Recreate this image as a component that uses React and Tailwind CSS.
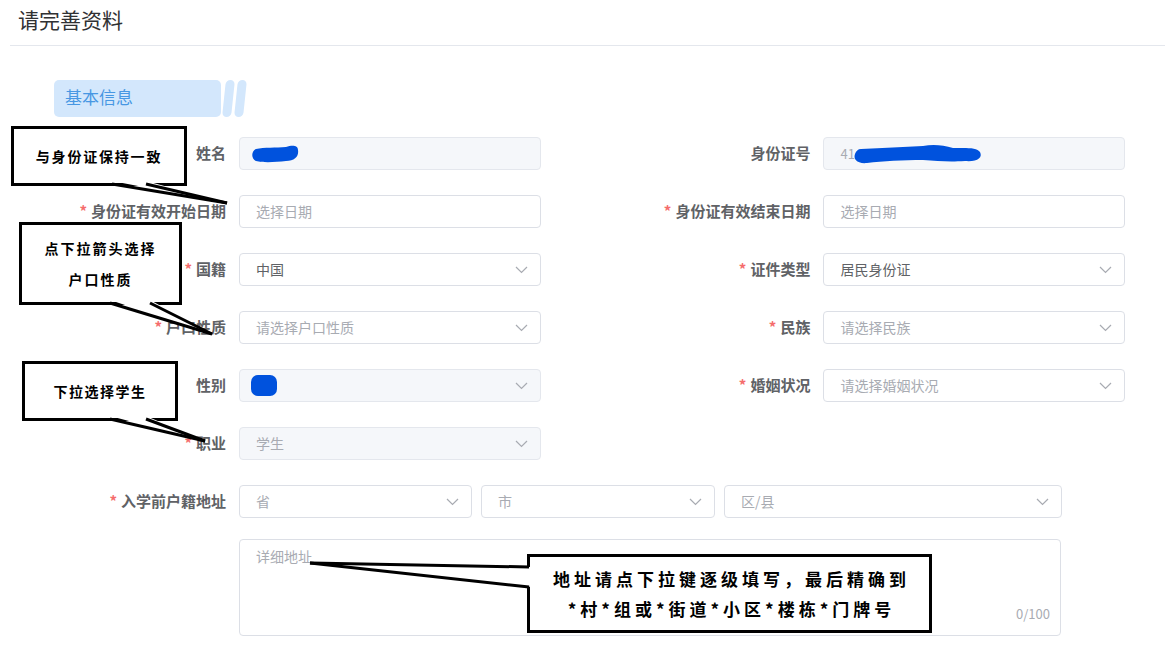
import React from 'react';

const FONT = { fontFamily: '"Noto Sans CJK SC", "Noto Sans", sans-serif' };

function Chevron() {
  return (
    <svg width="13" height="8" viewBox="0 0 13 8" className="shrink-0">
      <polyline points="1,1 6.5,6.5 12,1" fill="none" stroke="#a8abb2" strokeWidth="1.2" />
    </svg>
  );
}

function Field({ width, disabled, value, placeholder, select, children }) {
  return (
    <div
      className={`h-[33px] rounded-[4px] border flex items-center pl-[16px] pr-[12px] text-[14px] ${
        disabled ? 'bg-[#f5f7fa] border-[#e4e7ed]' : 'bg-white border-[#dcdfe6]'
      }`}
      style={{ width }}
    >
      <div className="flex-1 flex items-center min-w-0">
        {children}
        {value ? (
          <span className={disabled ? 'text-[#a8abb2]' : 'text-[#606266]'}>{value}</span>
        ) : (
          placeholder && <span className="text-[#a8abb2]">{placeholder}</span>
        )}
      </div>
      {select && <Chevron />}
    </div>
  );
}

function Label({ required, children }) {
  return (
    <div className="w-[239px] pr-[13px] text-right text-[15px] font-bold text-[#606266] shrink-0">
      {required && <span className="text-[#f56c6c] mr-[4px]">*</span>}
      {children}
    </div>
  );
}

function Item({ label, required, ...field }) {
  return (
    <div className="w-[586px] flex items-center">
      <Label required={required}>{label}</Label>
      <Field width="302px" {...field} />
    </div>
  );
}

function Callout({ className, textClass, lines }) {
  return (
    <div
      className={`absolute border-[3px] border-black bg-white flex flex-col items-center justify-center font-bold text-black ${className}`}
    >
      {lines.map((l) => (
        <div key={l} className={textClass}>
          {l}
        </div>
      ))}
    </div>
  );
}

// speech tails: two base points on the box edge and the tip they point to
const tails = [
  { a: [112, 184], b: [146, 184], tip: [227, 203], inset: [0, -3] },
  { a: [110, 303], b: [150, 303], tip: [212, 334], inset: [0, -3] },
  { a: [110, 419], b: [146, 419], tip: [205, 441], inset: [0, -3] },
  { a: [529, 567], b: [529, 587], tip: [310, 563], inset: [3, 0] },
];

export default function App() {
  return (
    <div className="relative w-[1165px] h-[651px] bg-white overflow-hidden" style={FONT}>
      <div className="ml-[10px] h-[46px] border-b border-[#e4e7ed] flex items-center pl-[8px] pb-[6px] text-[21px] text-[#303133]">
        请完善资料
      </div>

      <div className="mt-[34px] ml-[54px] flex items-stretch h-[37px]">
        <div className="w-[167px] rounded-[5px] bg-[#d3e7fc] flex items-center pl-[11px] pb-[3px] text-[17px] text-[#4797e3]">
          基本信息
        </div>
        <div className="ml-[3px] w-[9px] rounded-[5px] bg-[#d3e7fc] -skew-x-[6deg]" />
        <div className="ml-[3px] w-[9px] rounded-[5px] bg-[#d3e7fc] -skew-x-[6deg]" />
      </div>

      <div className="mt-[20px] flex flex-col gap-[25px]">
        <div className="flex">
          <Item label="姓名" disabled>
            <svg width="50" height="19" viewBox="0 0 50 19" className="-ml-[6px]">
              <path
                d="M6 5 C14 3 26 4 36 3 C42 1 48 1 48 6 C49 12 45 17 36 17 C26 18 14 19 6 17 C1 15 1 7 6 5 Z"
                fill="#0052dd"
              />
            </svg>
          </Item>
          <div className="w-[4px]" />
          <Item label="身份证号" disabled>
            <span className="text-[#a8abb2] text-[13px]">41</span>
            <svg width="130" height="22" viewBox="0 0 130 22" className="-ml-[2px]">
              <path
                d="M8 6 C30 5 50 4 70 3 C80 1 90 2 100 5 C112 5 124 4 127 9 C130 15 124 19 112 18 C95 19 85 18 70 17 C50 17 30 18 14 20 C4 21 0 16 2 11 C3 8 5 6 8 6 Z"
                fill="#0052dd"
              />
            </svg>
          </Item>
        </div>
        <div className="flex">
          <Item label="身份证有效开始日期" required placeholder="选择日期" />
          <div className="w-[4px]" />
          <Item label="身份证有效结束日期" required placeholder="选择日期" />
        </div>
        <div className="flex">
          <Item label="国籍" required value="中国" select />
          <div className="w-[4px]" />
          <Item label="证件类型" required value="居民身份证" select />
        </div>
        <div className="flex">
          <Item label="户口性质" required placeholder="请选择户口性质" select />
          <div className="w-[4px]" />
          <Item label="民族" required placeholder="请选择民族" select />
        </div>
        <div className="flex">
          <Item label="性别" disabled select>
            <div className="-ml-[5px] w-[26px] h-[21px] rounded-[7px] bg-[#0052dd]" />
          </Item>
          <div className="w-[4px]" />
          <Item label="婚姻状况" required placeholder="请选择婚姻状况" select />
        </div>
        <div className="flex">
          <Item label="职业" required disabled value="学生" select />
        </div>
        <div className="flex items-center">
          <Label required>入学前户籍地址</Label>
          <div className="flex gap-[9px]">
            <Field width="233px" placeholder="省" select />
            <Field width="234px" placeholder="市" select />
            <Field width="338px" placeholder="区/县" select />
          </div>
        </div>
      </div>

      <div className="mt-[21px] ml-[239px] w-[822px] h-[97px] rounded-[4px] border border-[#dcdfe6] flex flex-col justify-between pl-[16px] pr-[10px] pt-[6px] pb-[12px] text-[14px]">
        <div className="text-[#a8abb2]">详细地址</div>
        <div className="text-right text-[13px] text-[#a8abb2]">0/100</div>
      </div>

      <Callout
        className="left-[11px] top-[126px] w-[176px] h-[60px]"
        textClass="text-[14px] tracking-[1.8px]"
        lines={['与身份证保持一致']}
      />
      <Callout
        className="left-[19px] top-[222px] w-[163px] h-[83px] gap-[10px]"
        textClass="text-[14px] tracking-[2px]"
        lines={['点下拉箭头选择', '户口性质']}
      />
      <Callout
        className="left-[22px] top-[361px] w-[156px] h-[60px]"
        textClass="text-[14px] tracking-[1.5px]"
        lines={['下拉选择学生']}
      />
      <Callout
        className="left-[527px] top-[554px] w-[405px] h-[79px] gap-[4px] pl-[4px]"
        textClass="text-[17px] tracking-[4px]"
        lines={['地址请点下拉键逐级填写，最后精确到', '*村*组或*街道*小区*楼栋*门牌号']}
      />

      <svg className="absolute left-0 top-0 pointer-events-none" width="1165" height="651">
        {tails.map(({ a, b, tip, inset }, i) => (
          <g key={i}>
            <polygon
              points={`${a[0] + inset[0]},${a[1] + inset[1]} ${tip[0]},${tip[1]} ${b[0] + inset[0]},${b[1] + inset[1]}`}
              fill="white"
            />
            <line x1={a[0]} y1={a[1]} x2={tip[0]} y2={tip[1]} stroke="black" strokeWidth="3" />
            <line x1={b[0]} y1={b[1]} x2={tip[0]} y2={tip[1]} stroke="black" strokeWidth="3" />
          </g>
        ))}
      </svg>
    </div>
  );
}
